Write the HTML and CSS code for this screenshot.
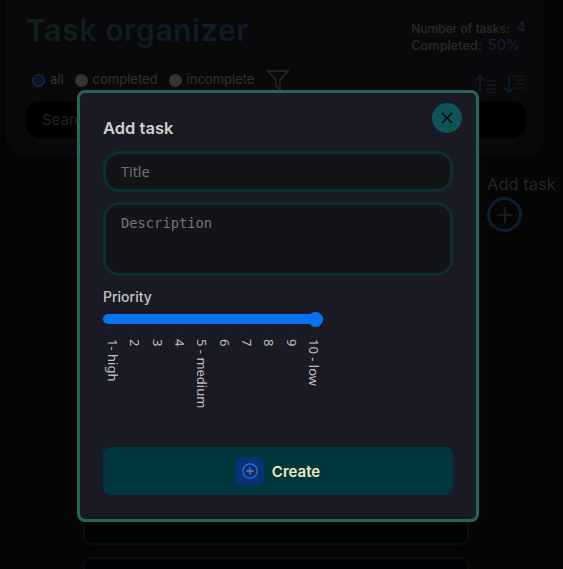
FILE: index.html
```html
<!DOCTYPE html>
<html lang="en">
<head>
<meta charset="utf-8">
<title>Task organizer</title>
<link rel="stylesheet" href="styles.css">
</head>
<body>
<div class="page">
  <header class="panel">
    <div class="panel-top">
      <h1 class="title">Task organizer</h1>
      <div class="stats">
        <div class="stat"><span>Number of tasks:</span><b>4</b></div>
        <div class="stat stat-done"><span>Completed:</span><b>50%</b></div>
      </div>
    </div>
    <div class="filters">
      <span class="radio on"></span><span class="radio-label">all</span>
      <span class="radio"></span><span class="radio-label">completed</span>
      <span class="radio"></span><span class="radio-label">incomplete</span>
      <svg class="filter-icon" viewBox="0 0 22 20" width="22" height="20"><path d="M1 1h20l-8 9v9l-4-3v-6z" fill="none" stroke="#8c8c8c" stroke-width="1.4"/></svg>
      <div class="sorts">
        <svg viewBox="0 0 23 20" width="23" height="20"><path d="M6 19V2M1 7l5-5 5 5" fill="none" stroke="#2464b0" stroke-width="1.6"/><path d="M12 7h10M12 11h10M12 15h10M12 18.500h10" fill="none" stroke="#484848" stroke-width="1.600"/></svg>
        <svg viewBox="0 0 23 20" width="23" height="20"><path d="M6 1v17M1 13l5 5 5-5" fill="none" stroke="#2464b0" stroke-width="1.6"/><path d="M9 2h13M12 6h10M12 10h10M12 14h10" fill="none" stroke="#484848" stroke-width="1.600"/></svg>
      </div>
    </div>
    <div class="search">Search</div>
  </header>
  <div class="content">
    <div class="list">
      <div class="card card-first"></div>
      <div class="card card-second"></div>
    </div>
    <div class="add">
      <span class="add-label">Add task</span>
      <span class="add-circle"><svg viewBox="0 0 24 24" width="24" height="24"><path d="M12 4v16M4 12h16" stroke="#5c5c5c" stroke-width="2.200" fill="none"/></svg></span>
    </div>
  </div>
</div>

<div class="overlay">
  <form class="modal">
    <button type="button" class="close" aria-label="Close"><svg viewBox="0 0 12 12" width="12" height="12"><path d="M1 1l10 10M11 1L1 11" stroke="#000" stroke-width="1.300" fill="none"/></svg></button>
    <h2 class="modal-title">Add task</h2>
    <input class="field field-title" type="text" placeholder="Title">
    <textarea class="field field-desc" placeholder="Description"></textarea>
    <label class="priority-label" for="priority">Priority</label>
    <input id="priority" class="range" type="range" min="1" max="10" value="10">
    <div class="marks"><i></i><i></i><i></i><i></i><i></i><i></i><i></i><i></i><i></i><i></i></div>
    <div class="ticks">
      <span>1- high</span><span>2</span><span>3</span><span>4</span><span>5 - medium</span><span>6</span><span>7</span><span>8</span><span>9</span><span>10 - low</span>
    </div>
    <button type="button" class="create">
      <span class="create-icon"><svg viewBox="0 0 16 16" width="16" height="16"><circle cx="8" cy="8" r="7.200" fill="none" stroke="#2f78e0" stroke-width="1.200"/><path d="M8 4.500v7M4.500 8h7" stroke="#6f7f9a" stroke-width="1.300" fill="none"/></svg></span>
      <span>Create</span>
    </button>
  </form>
</div>
</body>
</html>
```
FILE: styles.css
```css
* { box-sizing: border-box; }
html, body { margin: 0; height: 100%; }
body {
  background: #111117;
  font-family: "Inter", "Liberation Sans", sans-serif;
  overflow: hidden;
}
.page { width: 563px; height: 569px; overflow: hidden; padding: 0 18px 0 6px; }

.panel {
  width: 539px;
  height: 157px;
  padding: 10px 19px 0 20px;
  background: #212128;
  border-radius: 0 0 20px 20px;
}
.panel-top { display: flex; justify-content: space-between; height: 50px; }
.title {
  margin: 0;
  font-size: 30px;
  line-height: 40px;
  font-weight: 600;
  letter-spacing: 0.65px;
  background: linear-gradient(90deg, #38744f 0%, #2f6279 50%, #4154a4 100%);
  -webkit-background-clip: text;
  background-clip: text;
  color: transparent;
}
.stats { padding-top: 10px; margin-left: auto; color: #8c8c8c; font-size: 12px; line-height: 15px; font-weight: 500; }
.stat { display: flex; align-items: baseline; gap: 6px; height: 17px; }
.stat-done span { font-size: 12.800px; }
.stat b { font-weight: 400; font-size: 16px; line-height: 15px; color: #5560b8; }
.stat-done b { font-size: 14.500px; }

.filters { display: flex; align-items: center; height: 45px; padding-left: 6px; margin-top: -4px; color: #a4a4a4; font-size: 13px; }
.radio { width: 13px; height: 13px; border-radius: 50%; background: #b0b0b0; margin-top: 4px; }
.radio.on { background: #1a4fa8; border: 2px solid #3285e9; box-shadow: inset 0 0 0 1px #222; }
.radio-label { margin: 0 11px 0 5px; }
.filter-icon { margin: 3px 0 0 2px; }
.sorts { display: flex; gap: 6px; margin-left: auto; margin-top: 10px; }

.search {
  height: 37px;
  padding: 0 16px;
  border-radius: 14px;
  background: #000;
  color: #6e6e6e;
  font-size: 15px;
  line-height: 37px;
}

.content { display: flex; gap: 18px; }
.list { width: 386px; flex: none; margin-left: 77px; display: flex; flex-direction: column; gap: 12px; }
.card { border: 2px solid #2c2c30; border-radius: 8px; background: #000e08; height: 200px; flex: none; }
.card-first { margin-top: 188px; }
.card-second { background: #00061a; }
.add { display: flex; flex-direction: column; align-items: flex-start; gap: 2px; padding-top: 16px; white-space: nowrap; }
.add-label { color: #7c7c7c; font-size: 16.500px; line-height: 22px; }
.add-circle { width: 35px; height: 35px; border: 3px solid #2464b0; border-radius: 50%; display: flex; align-items: center; justify-content: center; }

.overlay {
  position: fixed;
  inset: 0;
  padding: 90px 0 0 77px;
  background: rgba(0, 0, 0, 0.7);
}
.modal {
  position: relative;
  display: flex;
  flex-direction: column;
  width: 402px;
  height: 432px;
  padding: 25px 23px 0;
  background: #1a1a24;
  border: 3px solid #266557;
  border-radius: 8px;
}
.close {
  position: absolute;
  top: 10px;
  right: 14px;
  width: 30px;
  height: 30px;
  padding: 0;
  border: 0;
  border-radius: 50%;
  background: #0f5357;
  display: flex;
  align-items: center;
  justify-content: center;
}
.modal-title { margin: 0 0 13px; font-size: 16.500px; line-height: 20px; font-weight: 600; color: #d0d0d0; }
.field {
  display: block;
  width: 100%;
  background: #131417;
  border: 3px solid #0d2f34;
  outline: 0;
  color: #ccc;
  resize: none;
}
.field::placeholder { color: #757575; opacity: 1; }
.field-title { height: 41px; border-radius: 16px; padding: 0 15px; font-family: "Open Sans", sans-serif; font-size: 14.500px; }
.field-desc { height: 74px; margin-top: 10px; border-radius: 16px; padding: 10px 15px; font-family: "DejaVu Sans Mono", monospace; font-size: 13.750px; line-height: 16px; }
.priority-label { margin-top: 11px; font-size: 14px; line-height: 20px; font-weight: 500; color: #c4c4c4; }
.range {
  -webkit-appearance: none;
  appearance: none;
  width: 220px;
  height: 16px;
  margin: 4px 0 0;
  background: transparent;
}
.range::-webkit-slider-runnable-track { height: 10px; border-radius: 5px; background: #0a72f0; }
.range::-webkit-slider-thumb { -webkit-appearance: none; width: 15px; height: 15px; margin-top: -2.500px; border-radius: 50%; background: #0a72f0; }
.marks { display: flex; justify-content: space-between; width: 205px; height: 2px; margin: 3px 0 0 8px; }
.marks i { width: 1px; height: 2px; background: #2a2b33; }
.ticks {
  display: flex;
  justify-content: space-between;
  width: 215px;
  height: 106px;
  margin: 7px 0 0 3px;
  color: #c0c0c0;
  font-family: "Noto Sans", sans-serif;
  font-size: 13px;
}
.ticks span { writing-mode: vertical-rl; line-height: 14px; white-space: nowrap; }
.create {
  display: flex;
  align-items: center;
  justify-content: center;
  gap: 8px;
  height: 48px;
  margin-top: 2px;
  border: 0;
  border-radius: 8px;
  background: #00363e;
  color: #f0e6c0;
  font-family: "Inter", sans-serif;
  font-size: 15px;
  font-weight: 600;
}
.create-icon { width: 28px; height: 28px; border-radius: 6px; background: #0a3078; display: flex; align-items: center; justify-content: center; }
```
